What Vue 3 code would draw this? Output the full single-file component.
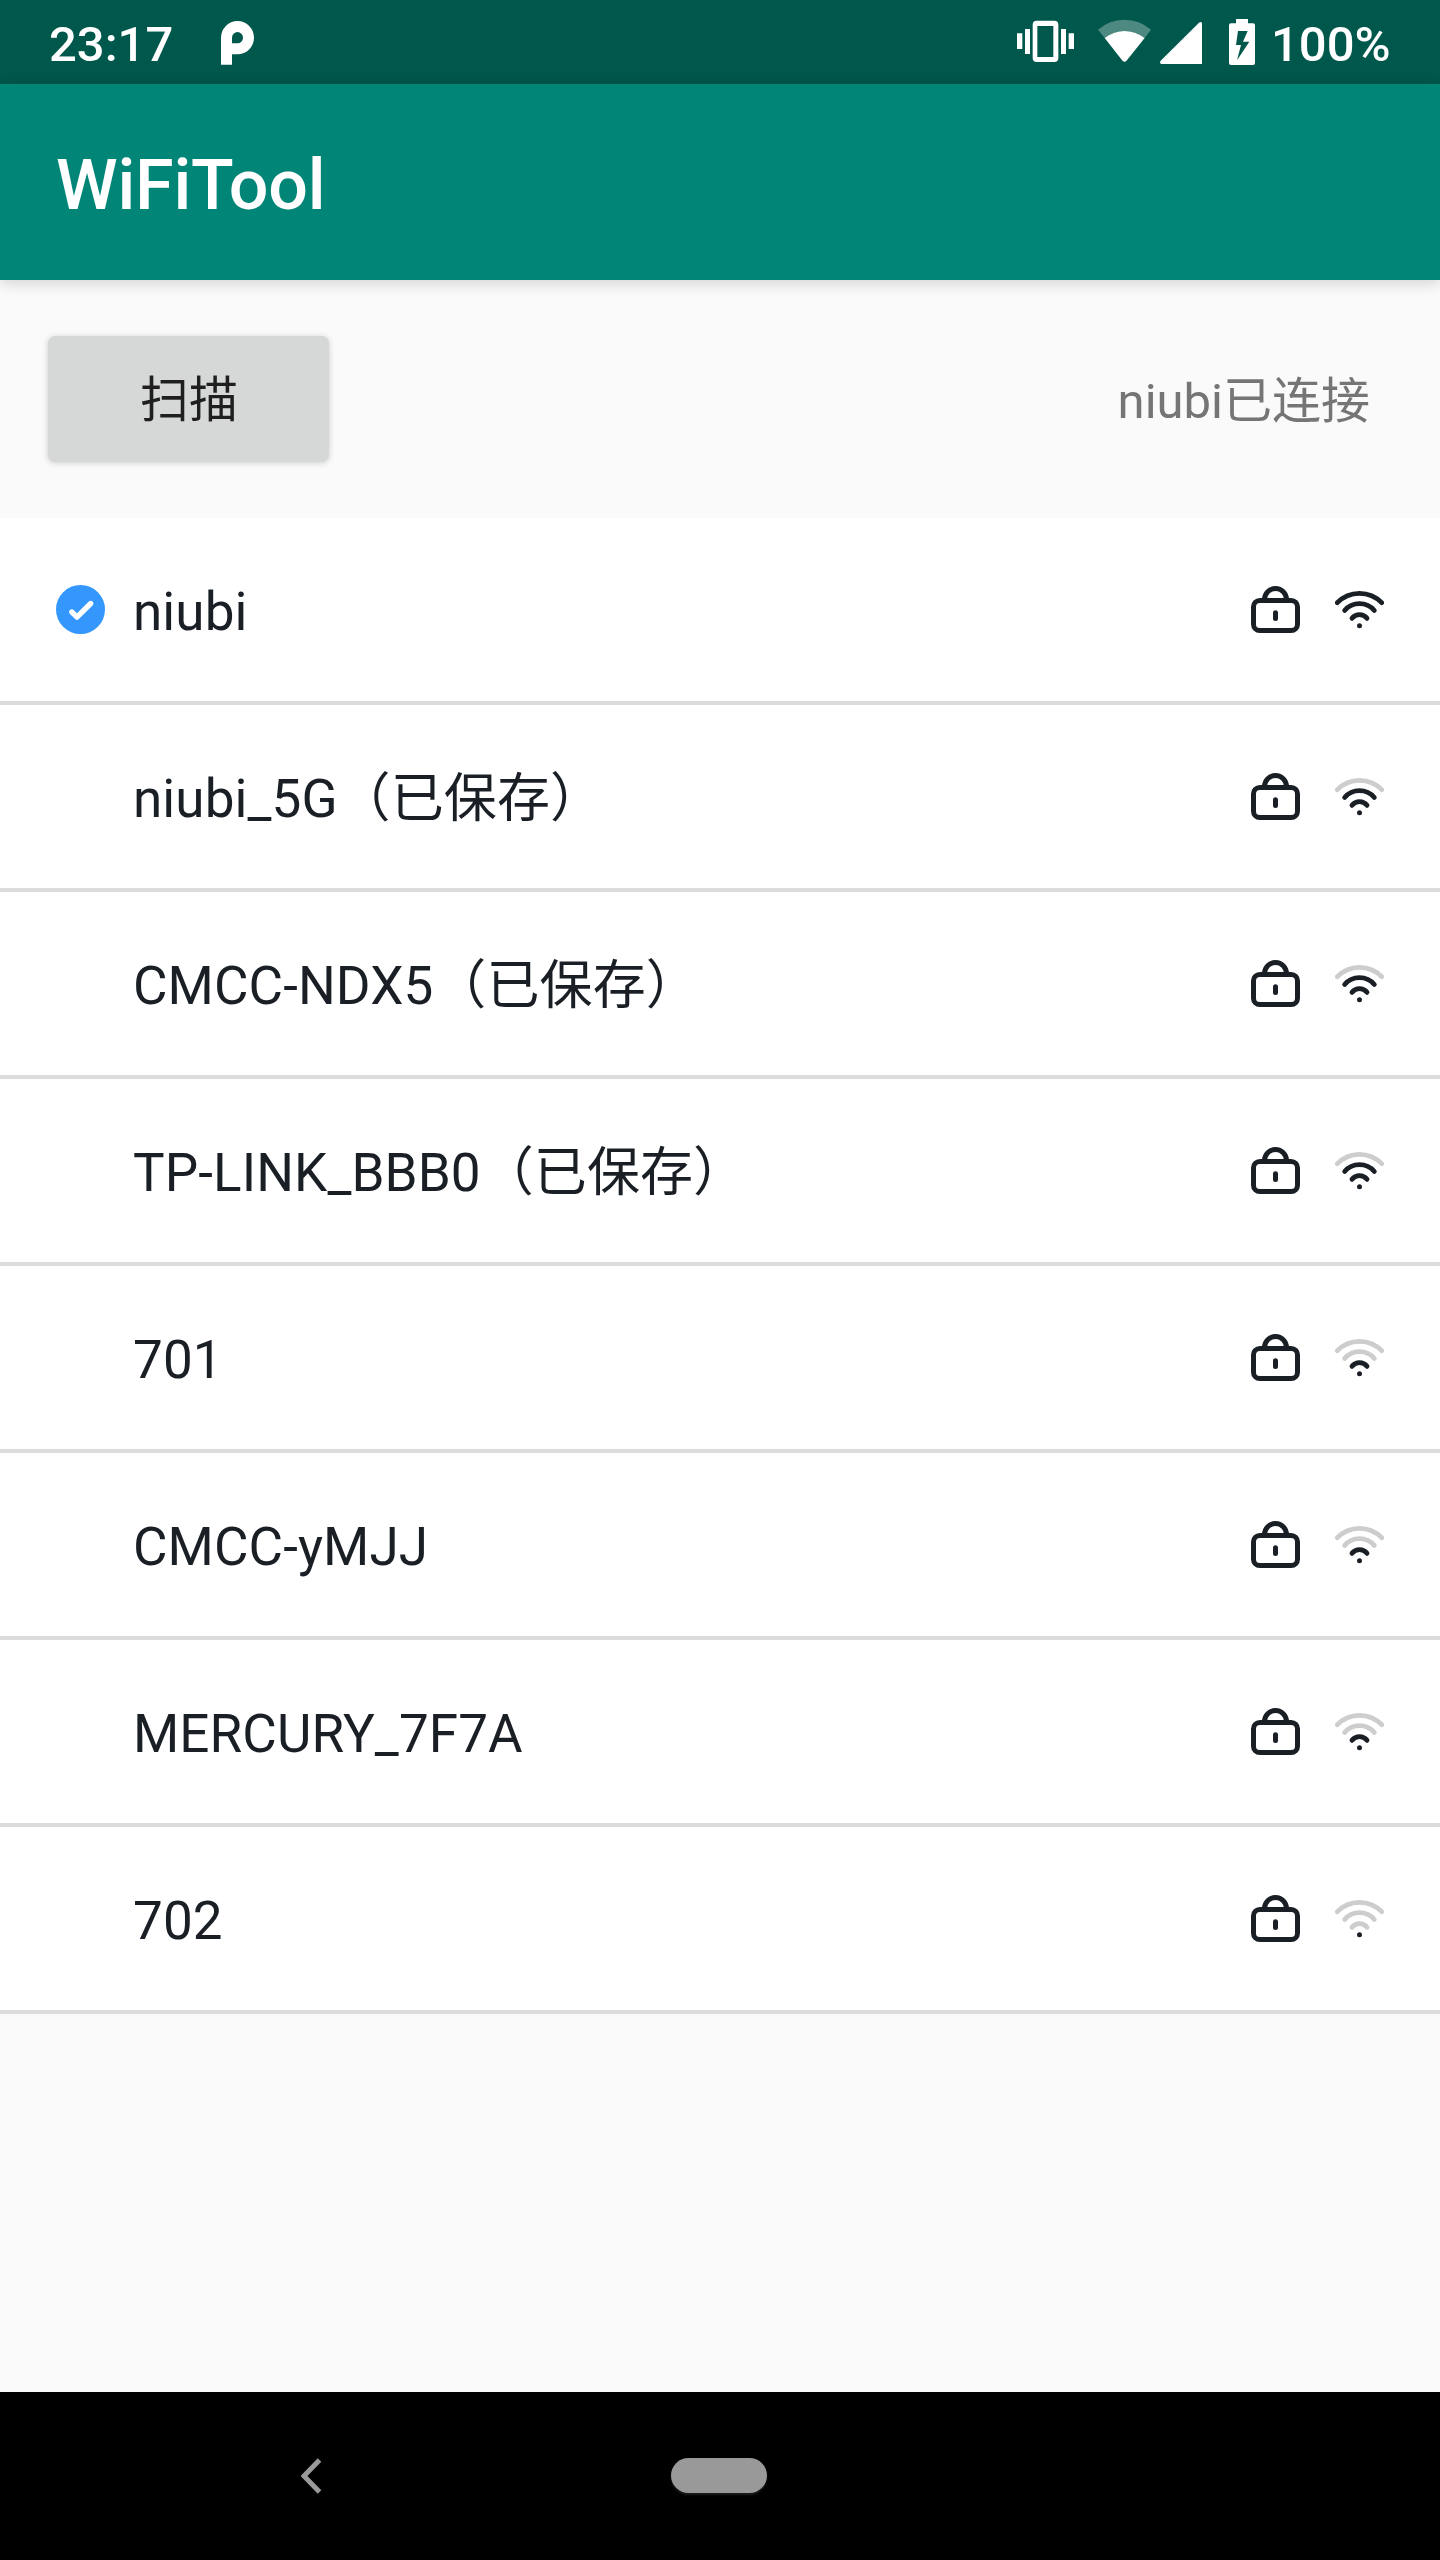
<script setup>
const networks = [
  { name: 'niubi', level: 3, connected: true },
  { name: 'niubi_5G（已保存）', level: 2 },
  { name: 'CMCC-NDX5（已保存）', level: 2 },
  { name: 'TP-LINK_BBB0（已保存）', level: 2 },
  { name: '701', level: 1 },
  { name: 'CMCC-yMJJ', level: 1 },
  { name: 'MERCURY_7F7A', level: 1 },
  { name: '702', level: 0 },
]
const arcs = [
  'M396 175A28.5 28.5 0 0 1 441 175',
  'M374 151.5A58.5 58.5 0 0 1 463 151.5',
  'M352 128A93 93 0 0 1 485 128',
]
</script>

<template>
  <div class="screen">
    <header class="status">
      <span class="time">23:17</span>
      <svg class="p" width="33" height="84" viewBox="663 0 99 252">
        <path fill="#fff" fill-rule="evenodd" d="M663 194V113A49.5 50 0 1 1 712.500 163H696V194ZM696 130V113A16.500 17 0 1 1 712.500 130Z" />
      </svg>
      <span class="spacer"></span>
      <svg width="57" height="84" viewBox="51 0 171 252">
        <path fill="#fff" d="M51 100h16v47H51zM75 87h15v75H75zM183 87h15v75h-15zM206 100h16v47h-16z" />
        <path fill="#fff" fill-rule="evenodd" d="M110 62h53a12 12 0 0 1 12 12v100a12 12 0 0 1-12 12h-53a12 12 0 0 1-12-12V74a12 12 0 0 1 12-12ZM112 78v93h48V78Z" />
      </svg>
      <svg class="wifi-status" width="53" height="84" viewBox="294 0 159 252">
        <path fill="#fff" fill-opacity=".3" d="M294 89Q328 59 373.500 59T453 89L434 114Q405 93 373.500 93T314 114Z" />
        <path fill="#fff" d="M314 114Q342 93 373.500 93T434 114L379 183Q373.500 188 368 183Z" />
      </svg>
      <svg class="signal" width="42" height="84" viewBox="480 0 126 252">
        <path fill="#fff" d="M482 182L597 68Q606 62 606 72V192H485Q477 190 482 182Z" />
      </svg>
      <svg class="battery" width="26" height="84" viewBox="687 0 78 252">
        <path fill="#fff" fill-rule="evenodd" d="M708 57h36v13h15a6 6 0 0 1 6 6v113a6 6 0 0 1-6 6h-66a6 6 0 0 1-6-6V76a6 6 0 0 1 6-6h15ZM714 93L708 135H723L711 181L748 125H729L743 93Z" />
      </svg>
      <span class="percent">100%</span>
    </header>

    <div class="appbar"><h1>WiFiTool</h1></div>

    <section class="tools">
      <button class="scan">扫描</button>
      <span class="state">niubi已连接</span>
    </section>

    <ul class="list">
      <li v-for="n in networks" :key="n.name" class="row">
        <span class="mark">
          <svg v-if="n.connected" width="49" height="183" viewBox="168 54 147 549">
            <circle cx="241.500" cy="328.500" r="73.500" fill="#3397fd" />
            <path d="M215.500 336L231 351.500L272 310.500" fill="none" stroke="#fff" stroke-width="16" stroke-linecap="round" stroke-linejoin="round" />
          </svg>
        </span>
        <span class="name">{{ n.name }}</span>
        <svg width="49" height="183" viewBox="93 -126 147 549" fill="none" stroke="#1a1f26" stroke-width="15" stroke-linecap="round">
          <rect x="100.500" y="121.500" width="132" height="90" rx="19" />
          <path d="M133.500 118.500a33 33 0 0 1 66 0M166.500 158.500v17" />
        </svg>
        <svg class="wifi" width="49" height="183" viewBox="345 -126 147 549" fill="none" stroke-width="14.500" stroke-linecap="round">
          <path v-for="(d, i) in arcs" :key="i" :d="d" :stroke="i < n.level ? '#1a1f26' : '#cdcdcd'" />
          <circle cx="418.500" cy="197" r="7.500" fill="#1a1f26" />
        </svg>
      </li>
    </ul>

    <footer class="nav">
      <svg class="back" width="21" height="36" viewBox="0 0 21 36">
        <path d="M18.500 2L3 18L18.500 34" fill="none" stroke="#999" stroke-width="5" />
      </svg>
      <span class="home"></span>
    </footer>
  </div>
</template>

<style>
body {
  margin: 0;
}
</style>

<style scoped>
.screen {
  width: 1440px;
  height: 2560px;
  display: flex;
  flex-direction: column;
  background: #fafafa;
  font-family: Roboto, "Noto Sans CJK SC", sans-serif;
  overflow: hidden;
}
svg {
  display: block;
  flex: none;
}
.status {
  height: 84px;
  box-sizing: border-box;
  padding: 0 50px 0 49px;
  display: flex;
  background: #00574b;
  color: #fff;
  font-size: 49px;
  font-weight: 500;
  line-height: 89px;
  white-space: nowrap;
}
.time {
  width: 172px;
}
.spacer {
  flex: 1;
}
.wifi-status {
  margin-left: 24px;
}
.signal {
  margin-left: 9px;
}
.battery {
  margin-left: 27px;
}
.percent {
  width: 119px;
  margin-left: 16px;
}
.appbar {
  height: 196px;
  flex: none;
  padding-left: 56px;
  background: #008577;
  box-shadow: 0 3px 14px rgba(0, 0, 0, 0.16);
}
h1 {
  margin: 0;
  color: #fff;
  font-size: 70px;
  font-weight: 500;
  letter-spacing: -0.2px;
  line-height: 202px;
}
.tools {
  height: 238px;
  flex: none;
  box-sizing: border-box;
  padding: 56px 70px 0 48px;
  display: flex;
  justify-content: space-between;
}
.scan {
  width: 281px;
  height: 126px;
  padding: 3px 0 0 1px;
  border: 0;
  border-radius: 7px;
  background: #d6d7d7;
  color: #1f1f1f;
  font: inherit;
  font-size: 49px;
  line-height: 123px;
  box-shadow: 0 1px 6px rgba(0, 0, 0, 0.18);
}
.state {
  color: #757575;
  font-size: 49px;
  line-height: 132px;
}
.list {
  margin: 0;
  padding: 0;
  list-style: none;
}
.row {
  height: 183px;
  padding: 0 56px;
  border-bottom: 4px solid #dcdcdc;
  display: flex;
  background: #fff;
  color: #1a1f26;
}
.mark {
  width: 77px;
}
.name {
  flex: 1;
  font-size: 53px;
  letter-spacing: 0.1px;
  line-height: 188px;
  white-space: nowrap;
}
.wifi {
  margin-left: 35px;
}
.nav {
  height: 168px;
  margin-top: auto;
  padding-left: 301px;
  display: flex;
  align-items: center;
  background: #000;
}
.home {
  width: 96px;
  height: 35px;
  margin-left: 349px;
  margin-bottom: 1px;
  border-radius: 18px;
  background: #999;
  box-shadow: 0 2px 2px #1c1c1c;
}
</style>
